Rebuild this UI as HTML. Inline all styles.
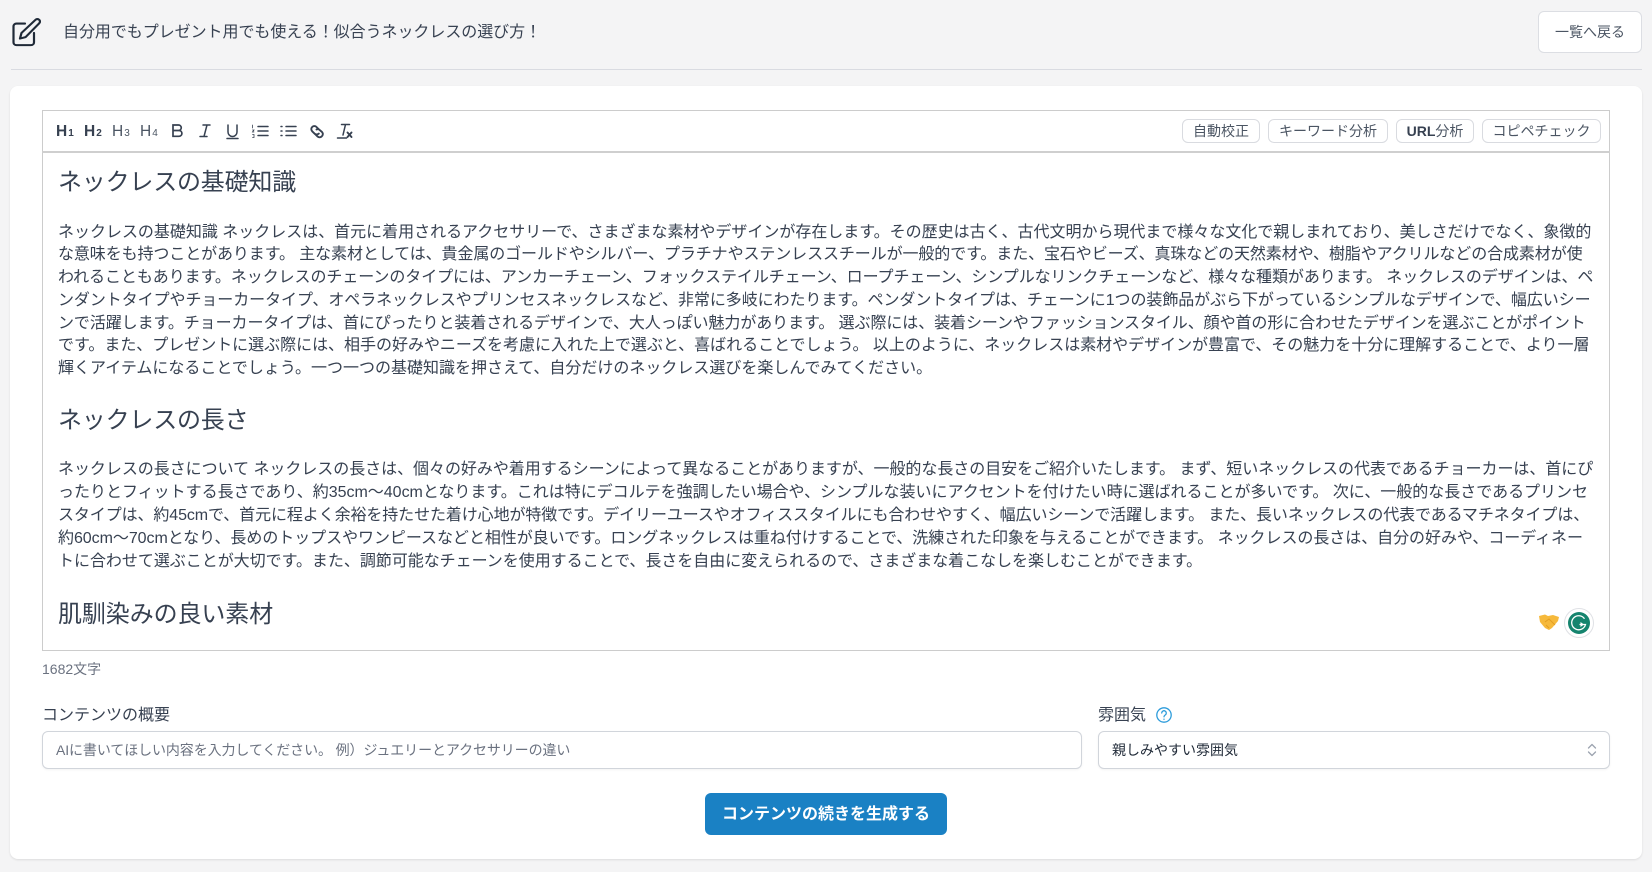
<!DOCTYPE html>
<html lang="ja">
<head>
<meta charset="utf-8">
<title>エディタ</title>
<style>
html,body{margin:0;padding:0;width:1652px;height:872px;overflow:hidden;background:#f4f4f5;}
body{position:relative;font-family:"Liberation Sans","Noto Sans CJK JP",sans-serif;color:#374151;}
.a{position:absolute;white-space:nowrap;}
.btn{position:absolute;box-sizing:border-box;background:#fff;border:1px solid #d9dbe0;border-radius:6px;text-align:center;white-space:nowrap;font-size:14px;color:#4b5563;top:119px;height:24px;line-height:23px;}
.l{position:absolute;left:58px;white-space:nowrap;font-size:16px;line-height:22px;height:22px;color:#374151;}
.h{position:absolute;left:58px;white-space:nowrap;font-size:24px;line-height:32px;color:#374151;letter-spacing:-.2px;}
.t{position:absolute;top:123px;height:18px;line-height:18px;white-space:nowrap;font-weight:700;font-size:15.500px;color:#374151;}
.t small{font-size:10px;margin-left:1px;}
</style>
</head>
<body>
<svg class="a" style="left:11px;top:17px" width="30" height="30" viewBox="0 0 30 32" preserveAspectRatio="none" fill="none" stroke="#1f2937" stroke-width="2.200" stroke-linecap="round" stroke-linejoin="round">
<path d="M14 7H5.500A3 3 0 0 0 2.500 10v17a3 3 0 0 0 3 3H20a3 3 0 0 0 3-3V17"/>
<path d="M9 23l1.500-6L24.500 3a2.600 2.600 0 0 1 3.700 0a2.600 2.600 0 0 1 0 3.700L14.500 21.500z"/>
</svg>
<div class="a" style="left:63px;top:21px;font-size:16px;line-height:24px;color:#374151;letter-spacing:-.05px">自分用でもプレゼント用でも使える！似合うネックレスの選び方！</div>
<div class="btn" style="left:1538px;top:11px;width:104px;height:42px;line-height:41px;border-color:#dcdee3;color:#4b5563">一覧へ戻る</div>
<div class="a" style="left:11px;top:69px;width:1631px;height:1px;background:#d9dbe1"></div>

<div class="a" style="left:10px;top:86px;width:1632px;height:773px;background:#fff;border-radius:8px;box-shadow:0 1px 2px rgba(0,0,0,.1)"></div>

<div class="a" style="left:42px;top:110px;width:1568px;height:541px;box-sizing:border-box;border:1px solid #cccccc;background:#fff"></div>
<div class="a" style="left:42px;top:151px;width:1568px;height:2px;background:#cfcfcf"></div>

<div class="t" style="left:56px">H<small>1</small></div>
<div class="t" style="left:84px">H<small>2</small></div>
<div class="t" style="left:112px;font-weight:400;color:#4b5563">H<small>3</small></div>
<div class="t" style="left:140px;font-weight:400;color:#4b5563">H<small>4</small></div>
<svg class="a" style="left:168px;top:122px" width="190" height="18" viewBox="0 0 190 18" fill="none" stroke="#374151" stroke-width="1.500" stroke-linecap="round">
<path transform="translate(1 0)" d="M4 3h5.500a2.700 2.700 0 0 1 0 5.500H4zM4 8.500h6a2.900 2.900 0 0 1 0 5.800H4z" stroke-width="1.700"/>
<path transform="translate(3 0)" d="M32 3h7M29 14.500h7M36 3l-3 11.500"/>
<path transform="translate(3 0)" d="M57 3v7a4.500 4.500 0 0 0 9 0V3M56 16.500h11"/>
<g transform="translate(5 0)">
<path d="M85 4.500h10M85 9h10M85 13.500h10"/>
<path d="M79.500 3v3M79.500 8h1.500l-1.500 2h1.500M79.500 12.500h1.500v3h-1.500" stroke-width=".8"/>
</g>
<g transform="translate(5 0)">
<path d="M113 4.500h10M113 9h10M113 13.500h10"/>
<path d="M108 4.500h1M108 9h1M108 13.500h1"/>
</g>
<g stroke-width="1.900" transform="translate(7 -1)">
<path d="M143 7.500l-1.500-1.500a3 3 0 0 0-4.300 4.300l2.300 2.300a3 3 0 0 0 4.300 0"/>
<path d="M141.500 8.500l2-.5 3.500 3a3 3 0 0 1-.4 4.500 3 3 0 0 1-4 0L140 13"/>
</g>
<g transform="translate(3.500 0)">
<path d="M170 2.500h8M174 2.500l-2.500 10.500M166 16h9"/>
<path d="M176 10.500l4 4.500M180 10.500l-4 4.500" stroke-width="1.900"/>
</g>
</svg>

<div class="btn" style="left:1182px;width:78px">自動校正</div>
<div class="btn" style="left:1268px;width:120px">キーワード分析</div>
<div class="btn" style="left:1396px;width:78px"><b style="color:#374151">URL</b>分析</div>
<div class="btn" style="left:1482px;width:119px">コピペチェック</div>

<div class="h" style="top:167px">ネックレスの基礎知識</div>
<div class="l" style="top:222px;letter-spacing:-.015px">ネックレスの基礎知識 ネックレスは、首元に着用されるアクセサリーで、さまざまな素材やデザインが存在します。その歴史は古く、古代文明から現代まで様々な文化で親しまれており、美しさだけでなく、象徴的</div>
<div class="l" style="top:244px;letter-spacing:-.1px">な意味をも持つことがあります。 主な素材としては、貴金属のゴールドやシルバー、プラチナやステンレススチールが一般的です。また、宝石やビーズ、真珠などの天然素材や、樹脂やアクリルなどの合成素材が使</div>
<div class="l" style="top:267px;letter-spacing:-.07px">われることもあります。ネックレスのチェーンのタイプには、アンカーチェーン、フォックステイルチェーン、ロープチェーン、シンプルなリンクチェーンなど、様々な種類があります。 ネックレスのデザインは、ペ</div>
<div class="l" style="top:290px;letter-spacing:-.07px">ンダントタイプやチョーカータイプ、オペラネックレスやプリンセスネックレスなど、非常に多岐にわたります。ペンダントタイプは、チェーンに1つの装飾品がぶら下がっているシンプルなデザインで、幅広いシー</div>
<div class="l" style="top:313px;letter-spacing:-.08px">ンで活躍します。チョーカータイプは、首にぴったりと装着されるデザインで、大人っぽい魅力があります。 選ぶ際には、装着シーンやファッションスタイル、顔や首の形に合わせたデザインを選ぶことがポイント</div>
<div class="l" style="top:335px;letter-spacing:-.02px">です。また、プレゼントに選ぶ際には、相手の好みやニーズを考慮に入れた上で選ぶと、喜ばれることでしょう。 以上のように、ネックレスは素材やデザインが豊富で、その魅力を十分に理解することで、より一層</div>
<div class="l" style="top:358px">輝くアイテムになることでしょう。一つ一つの基礎知識を押さえて、自分だけのネックレス選びを楽しんでみてください。</div>

<div class="h" style="top:405px">ネックレスの長さ</div>
<div class="l" style="top:459px;letter-spacing:-.04px">ネックレスの長さについて ネックレスの長さは、個々の好みや着用するシーンによって異なることがありますが、一般的な長さの目安をご紹介いたします。 まず、短いネックレスの代表であるチョーカーは、首にぴ</div>
<div class="l" style="top:482px;letter-spacing:-.01px">ったりとフィットする長さであり、約35cm～40cmとなります。これは特にデコルテを強調したい場合や、シンプルな装いにアクセントを付けたい時に選ばれることが多いです。 次に、一般的な長さであるプリンセ</div>
<div class="l" style="top:505px;letter-spacing:-.1px">スタイプは、約45cmで、首元に程よく余裕を持たせた着け心地が特徴です。デイリーユースやオフィススタイルにも合わせやすく、幅広いシーンで活躍します。 また、長いネックレスの代表であるマチネタイプは、</div>
<div class="l" style="top:528px;letter-spacing:-.05px">約60cm～70cmとなり、長めのトップスやワンピースなどと相性が良いです。ロングネックレスは重ね付けすることで、洗練された印象を与えることができます。 ネックレスの長さは、自分の好みや、コーディネー</div>
<div class="l" style="top:551px;letter-spacing:-.03px">トに合わせて選ぶことが大切です。また、調節可能なチェーンを使用することで、長さを自由に変えられるので、さまざまな着こなしを楽しむことができます。</div>

<div class="h" style="top:599px;letter-spacing:-.1px">肌馴染みの良い素材</div>

<svg class="a" style="left:1538px;top:613px" width="22" height="20" viewBox="0 0 22 20">
<path d="M1 3l6-1.500 3 1.500 5-1 6 2-1 4-6 7-3 2-4-2-5-6z" fill="#f6b93b"/>
<path d="M7 9l4-3 6 6M8 12l3 3" fill="none" stroke="#e39f22" stroke-width="1"/>
</svg>
<svg class="a" style="left:1564px;top:608px" width="30" height="30" viewBox="0 0 30 30">
<circle cx="15" cy="15" r="14.500" fill="#fff" stroke="#dfe1e5"/>
<circle cx="15" cy="15" r="11" fill="#15846e"/>
<path d="M20.500 10.800A7 7 0 1 0 21.500 16.500H15.500" fill="none" stroke="#fff" stroke-width="1.300"/>
<path d="M16.500 14l3.500 2.500-3.500 2.500z" fill="#fff"/>
</svg>

<div class="a" style="left:42px;top:659px;font-size:14px;line-height:20px;color:#6b7280">1682文字</div>

<div class="a" style="left:42px;top:704px;font-size:16px;line-height:24px;color:#374151">コンテンツの概要</div>
<div class="a" style="left:42px;top:731px;width:1040px;height:38px;box-sizing:border-box;background:#fff;border:1px solid #d1d5db;border-radius:6px;box-shadow:0 1px 2px rgba(0,0,0,.05);padding-left:13px;font-size:14px;line-height:37px;color:#6b7280;letter-spacing:-.1px">AIに書いてほしい内容を入力してください。 例）ジュエリーとアクセサリーの違い</div>

<div class="a" style="left:1098px;top:704px;font-size:16px;line-height:24px;color:#374151">雰囲気</div>
<svg class="a" style="left:1155px;top:706px" width="18" height="18" viewBox="0 0 18 18" fill="none" stroke="#2d9cdb" stroke-width="1.300" stroke-linecap="round">
<circle cx="9" cy="9" r="7.200"/>
<path d="M6.700 7a2.300 2.300 0 1 1 3.500 2c-.8.500-1.200.9-1.200 1.800"/>
<path d="M9 13.200v.1"/>
</svg>
<div class="a" style="left:1098px;top:731px;width:512px;height:38px;box-sizing:border-box;background:#fff;border:1px solid #d1d5db;border-radius:6px;box-shadow:0 1px 2px rgba(0,0,0,.05);padding-left:13px;font-size:14px;line-height:37px;color:#1f2937">親しみやすい雰囲気</div>
<svg class="a" style="left:1586px;top:742px" width="12" height="16" viewBox="0 0 12 16" fill="none" stroke="#9ca3af" stroke-width="1.300" stroke-linecap="round" stroke-linejoin="round">
<path d="M2.500 6L6 2.500 9.500 6M2.500 10L6 13.500 9.500 10"/>
</svg>

<div class="a" style="left:705px;top:793px;width:242px;height:42px;background:#1a81c4;border-radius:6px;color:#fff;font-weight:700;font-size:16px;line-height:43px;text-align:center">コンテンツの続きを生成する</div>
</body>
</html>
